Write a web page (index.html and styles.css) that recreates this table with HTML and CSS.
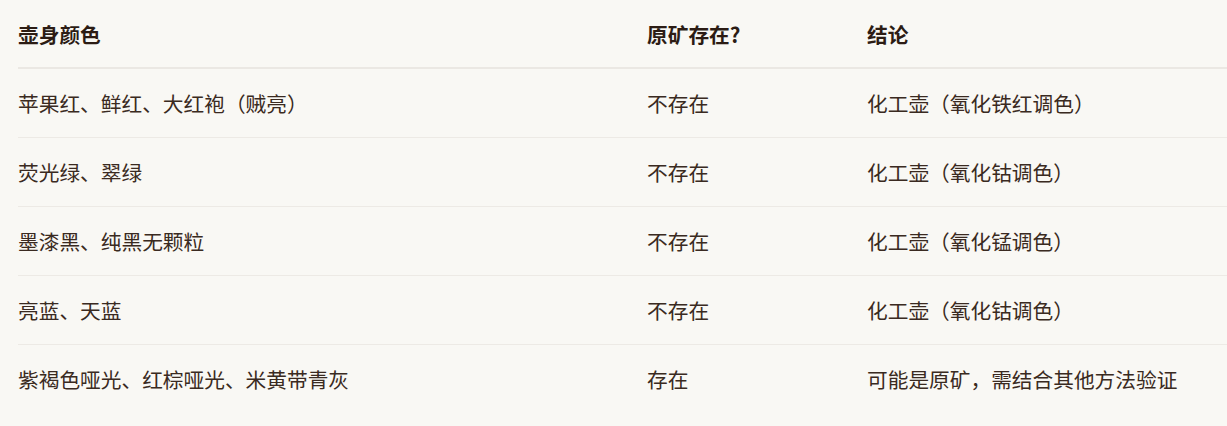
FILE: index.html
```html
<!DOCTYPE html>
<html lang="zh-CN">
<head>
<meta charset="utf-8">
<link rel="stylesheet" href="styles.css">
</head>
<body>
<table class="tbl">
  <colgroup>
    <col class="c1"><col class="c2"><col class="c3">
  </colgroup>
  <thead>
    <tr><th>壶身颜色</th><th>原矿存在?</th><th>结论</th></tr>
  </thead>
  <tbody>
    <tr><td>苹果红、鲜红、大红袍（贼亮）</td><td>不存在</td><td>化工壶（氧化铁红调色）</td></tr>
    <tr><td>荧光绿、翠绿</td><td>不存在</td><td>化工壶（氧化钴调色）</td></tr>
    <tr><td>墨漆黑、纯黑无颗粒</td><td>不存在</td><td>化工壶（氧化锰调色）</td></tr>
    <tr><td>亮蓝、天蓝</td><td>不存在</td><td>化工壶（氧化钴调色）</td></tr>
    <tr><td>紫褐色哑光、红棕哑光、米黄带青灰</td><td>存在</td><td>可能是原矿，需结合其他方法验证</td></tr>
  </tbody>
</table>
</body>
</html>
```
FILE: styles.css
```css
html, body {
  margin: 0;
  padding: 0;
  background: #f9f8f4;
}
body {
  padding-left: 18px;
  font-family: "Noto Sans CJK SC", "Noto Sans", sans-serif;
  font-size: 20.7px;
  color: #3a2a21;
  overflow: hidden;
}
.tbl {
  border-collapse: collapse;
  width: 1240px;
  table-layout: fixed;
}
.c1 { width: 629px; }
.c2 { width: 220px; }
.tbl th, .tbl td {
  text-align: left;
  padding: 0;
  vertical-align: middle;
  white-space: nowrap;
}
.tbl th {
  height: 67px;
  font-weight: 700;
  color: #2c1c14;
  border-bottom: 2px solid #ebe8e3;
}
.tbl td {
  height: 68px;
  border-bottom: 1px solid #edeae5;
}
.tbl tbody tr:last-child td {
  border-bottom: none;
}
```
